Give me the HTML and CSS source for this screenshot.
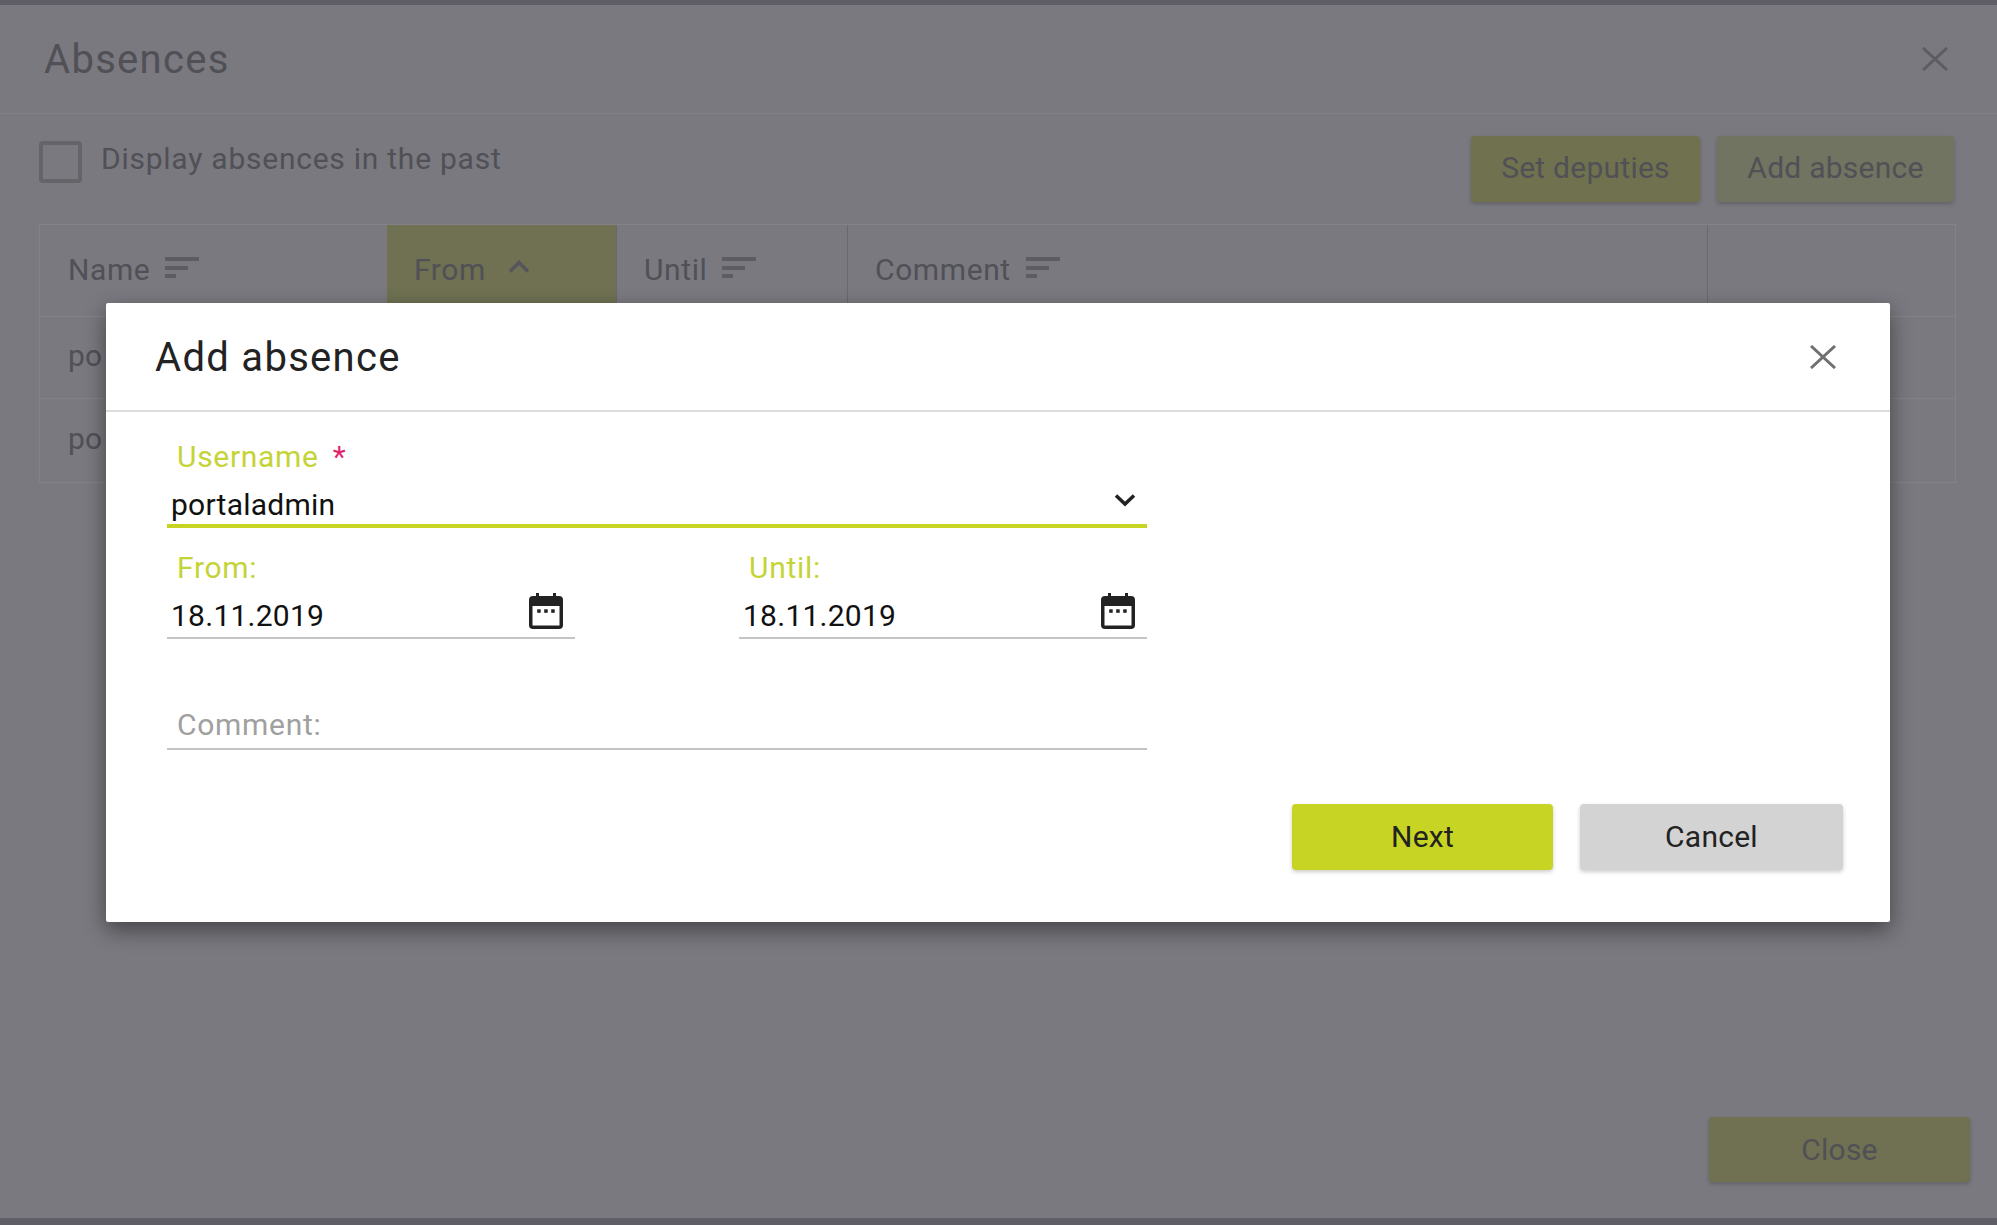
FILE: index.html
```html
<!DOCTYPE html>
<html lang="en">

<head>
    <meta charset="UTF-8">
    <meta name="viewport" content="width=device-width, initial-scale=1.0">
    <title>Absences</title>
    <link rel="stylesheet" href="styles.css">
</head>
<body>
    <!-- Dimmed page behind the dialog -->
    <div class="page">
        <header class="page-header">
            <h1>Absences</h1>
            <svg class="icon-close" width="26" height="24" viewBox="0 0 26 24"><path d="M1 1L25 23M25 1L1 23"/></svg>
        </header>
        <div class="toolbar">
            <label class="past-toggle">
                <span class="checkbox"></span>
                <span>Display absences in the past</span>
            </label>
            <div class="toolbar-buttons">
                <button class="btn btn-deputies" type="button">Set deputies</button>
                <button class="btn btn-add" type="button">Add absence</button>
            </div>
        </div>
        <div class="table">
            <div class="th">Name
                <svg class="sort-icon" width="34" height="21" viewBox="0 0 34 21"><path d="M0 0h34v4H0zM0 9h23v4H0zM0 17h11v4H0z"/></svg>
            </div>
            <div class="th th-active">From
                <svg class="sort-up" width="22" height="13" viewBox="0 0 22 13"><path d="M2 11.5L11 2.5L20 11.5"/></svg>
            </div>
            <div class="th">Until
                <svg class="sort-icon" width="34" height="21" viewBox="0 0 34 21"><path d="M0 0h34v4H0zM0 9h23v4H0zM0 17h11v4H0z"/></svg>
            </div>
            <div class="th th-wide">Comment
                <svg class="sort-icon" width="34" height="21" viewBox="0 0 34 21"><path d="M0 0h34v4H0zM0 9h23v4H0zM0 17h11v4H0z"/></svg>
            </div>
            <div class="th th-last"></div>
            <div class="row">po</div>
            <div class="row row-tall">po</div>
        </div>
        <footer class="page-footer">
            <button class="btn btn-close" type="button">Close</button>
        </footer>
    </div>

    <!-- Add absence dialog -->
    <div class="overlay">
        <div class="dialog">
            <div class="dialog-head">
                <h2>Add absence</h2>
                <svg class="icon-close icon-close-dark" width="26" height="24" viewBox="0 0 26 24"><path d="M1 1L25 23M25 1L1 23"/></svg>
            </div>
            <form class="dialog-form">
                <div class="field field-user">
                    <div class="field-label">Username <span class="required">*</span></div>
                    <div class="field-value field-value-focus">
                        <span>portaladmin</span>
                        <svg class="chevron" width="22" height="14" viewBox="0 0 22 14"><path d="M2 2.5L11 11L20 2.5"/></svg>
                    </div>
                </div>
                <div class="date-row">
                    <div class="field">
                        <div class="field-label">From:</div>
                        <div class="field-value">
                            <span>18.11.2019</span>
                            <svg class="calendar" width="34" height="36" viewBox="0 0 34 36"><path d="M7 0h3v5H7zM24 0h3v5h-3z"/><rect x="0" y="3" width="34" height="33" rx="4"/><rect class="calendar-page" x="3.5" y="13" width="27" height="19.5"/><rect x="8.2" y="16.3" width="3.5" height="3.5"/><rect x="15.2" y="16.3" width="3.5" height="3.5"/><rect x="22.2" y="16.3" width="3.5" height="3.5"/></svg>
                        </div>
                    </div>
                    <div class="field">
                        <div class="field-label">Until:</div>
                        <div class="field-value">
                            <span>18.11.2019</span>
                            <svg class="calendar" width="34" height="36" viewBox="0 0 34 36"><path d="M7 0h3v5H7zM24 0h3v5h-3z"/><rect x="0" y="3" width="34" height="33" rx="4"/><rect class="calendar-page" x="3.5" y="13" width="27" height="19.5"/><rect x="8.2" y="16.3" width="3.5" height="3.5"/><rect x="15.2" y="16.3" width="3.5" height="3.5"/><rect x="22.2" y="16.3" width="3.5" height="3.5"/></svg>
                        </div>
                    </div>
                </div>
                <div class="field field-comment">
                    <div class="field-label field-label-idle">Comment:</div>
                </div>
            </form>
            <div class="dialog-actions">
                <button class="btn btn-next" type="button">Next</button>
                <button class="btn btn-cancel" type="button">Cancel</button>
            </div>
        </div>
    </div>
</body>
</html>
```

FILE: styles.css
```css
* {
    box-sizing: border-box;
}

body {
    margin: 0;
    height: 1225px;
    overflow: hidden;
    font-family: 'Roboto', sans-serif;
    font-size: 30px;
    letter-spacing: 0.25px;
    background-color: #7a797f;
    color: #505056;
}

.page {
    height: 1225px;
    display: flex;
    flex-direction: column;
    border-top: 5px solid #5f5e66;
    border-bottom: 7px solid #5f5e66;
}

.page-header {
    height: 109px;
    flex-shrink: 0;
    display: flex;
    align-items: center;
    justify-content: space-between;
    padding: 0 49px 0 44px;
    border-bottom: 1px solid #808086;
}

h1 {
    margin: 0;
    font-size: 40px;
    font-weight: 400;
    letter-spacing: 1.3px;
}

.icon-close path {
    fill: none;
    stroke: #5c5c62;
    stroke-width: 3;
}

.icon-close-dark path {
    stroke: #707070;
}

.toolbar {
    display: flex;
    justify-content: space-between;
    padding: 22px 43px 0 39px;
    height: 110px;
    flex-shrink: 0;
}

.past-toggle {
    display: flex;
    align-items: flex-start;
    gap: 19px;
    padding-top: 5px;
    letter-spacing: 0.75px;
}

.checkbox {
    width: 43px;
    height: 42px;
    border: 4px solid #646469;
    border-radius: 4px;
}

.toolbar-buttons {
    display: flex;
    gap: 17px;
}

.btn {
    height: 66px;
    border: none;
    border-radius: 4px;
    font-family: inherit;
    font-size: 30px;
    letter-spacing: 0.25px;
    color: #505056;
    padding: 0;
    box-shadow: 0 2px 4px rgba(0, 0, 0, 0.2);
}

.btn-deputies {
    width: 229px;
    padding-bottom: 3px;
    background-color: #70724f;
}

.btn-add {
    width: 237px;
    padding-bottom: 3px;
    background-color: #717460;
}

.table {
    margin-left: 39px;
    width: 1917px;
    display: grid;
    grid-template-columns: 347px 230px 231px 860px 247px;
    grid-template-rows: 92px 82px 83px;
    border: 1px solid #838288;
}

.th {
    display: flex;
    align-items: center;
    gap: 15px;
    padding: 0 0 3px 27px;
    letter-spacing: 0.6px;
    border-bottom: 1px solid #838288;
    border-right: 1px solid #68686e;
}

.th:first-child {
    border-right: none;
    padding-left: 28px;
}

.th-active {
    background-color: #6f7152;
    gap: 22px;
    padding-left: 27px;
}

.th-last {
    border-right: none;
}

.sort-icon {
    margin-bottom: 4px;
}

.sort-icon path {
    fill: #5c5c62;
}

.sort-up {
    margin-bottom: 6px;
}

.sort-up path {
    fill: none;
    stroke: #55555b;
    stroke-width: 3.5;
}

.row {
    grid-column: 1 / -1;
    display: flex;
    align-items: center;
    padding: 0 0 4px 28px;
    border-bottom: 1px solid #838288;
}

.row-tall {
    border-bottom: none;
}

.page-footer {
    flex: 1;
    display: flex;
    justify-content: flex-end;
    align-items: flex-end;
    padding: 0 27px 36px 0;
}

.btn-close {
    width: 261px;
    height: 65px;
    background-color: #6f7152;
}

.overlay {
    position: absolute;
    inset: 0;
    padding: 303px 0 0 106px;
}

.dialog {
    width: 1784px;
    height: 619px;
    background-color: #fff;
    border-radius: 2px;
    box-shadow: 0 8px 22px rgba(0, 0, 0, 0.45);
    color: #111;
}

.dialog-head {
    height: 109px;
    display: flex;
    align-items: center;
    justify-content: space-between;
    padding: 1px 54px 0 49px;
    border-bottom: 2px solid #ddd;
}

h2 {
    margin: 0;
    font-size: 40px;
    font-weight: 400;
    letter-spacing: 1.3px;
    color: #222;
}

.dialog-form {
    width: 980px;
    margin-left: 61px;
    padding-top: 27px;
}

.field-label {
    height: 36px;
    line-height: 36px;
    padding-left: 10px;
    color: #c4d436;
    letter-spacing: 0.7px;
}

.required {
    color: #e0246e;
    margin-left: 6px;
}

.field-value {
    display: flex;
    justify-content: space-between;
    height: 41px;
    margin-top: 12px;
    padding: 0 12px 0 4px;
    line-height: 36px;
    border-bottom: 2px solid #c4c4c4;
}

.field-value-focus {
    height: 41px;
    border-bottom: 4px solid #c8d423;
    padding-right: 11px;
}

.chevron {
    margin-top: 6px;
}

.chevron path {
    fill: none;
    stroke: #222;
    stroke-width: 3.5;
}

.calendar {
    margin-top: -5px;
    fill: #222;
}

.calendar .calendar-page {
    fill: #fff;
}

.date-row {
    display: grid;
    grid-template-columns: 408px 408px;
    column-gap: 164px;
    margin-top: 22px;
}

.field-comment {
    margin-top: 68px;
    height: 43px;
    border-bottom: 2px solid #c4c4c4;
}

.field-label-idle {
    color: #a0a0a0;
}

.dialog-actions {
    display: flex;
    justify-content: flex-end;
    gap: 27px;
    margin-top: 54px;
    padding-right: 47px;
}

.dialog-actions .btn {
    padding-bottom: 2px;
    color: #222;
}

.btn-next {
    width: 261px;
    background-color: #c8d423;
}

.btn-cancel {
    width: 263px;
    background-color: #d3d3d3;
}
```
